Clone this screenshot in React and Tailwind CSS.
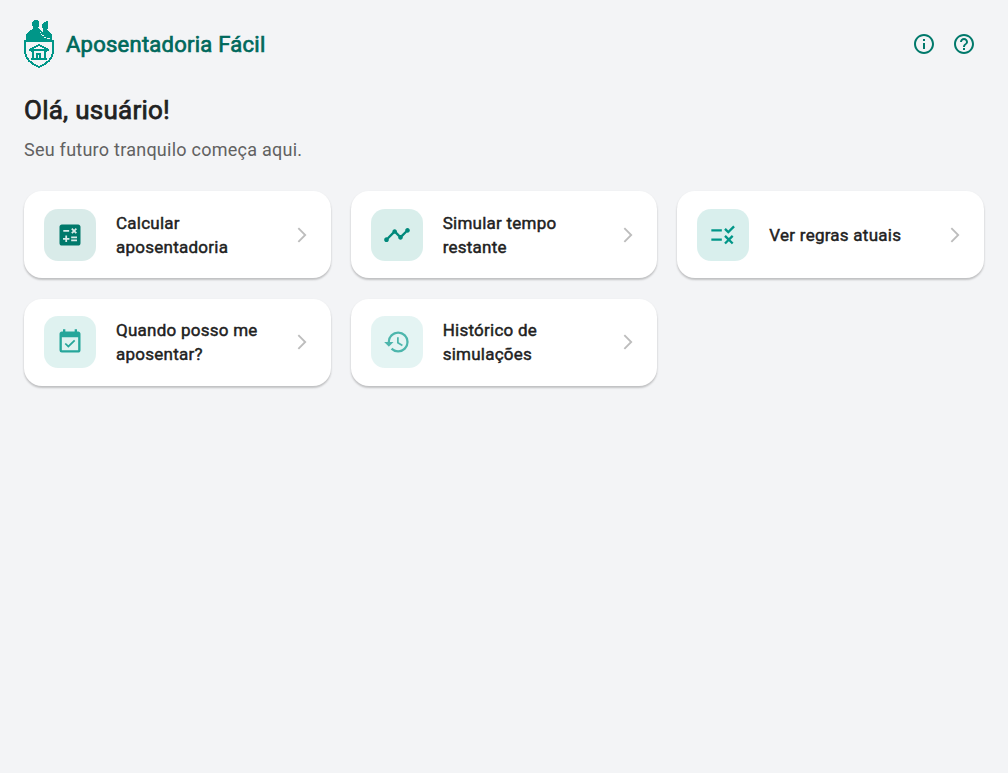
import { MdCalculate, MdTimeline, MdRule, MdEventAvailable, MdHistory, MdArrowForwardIos, MdInfoOutline, MdHelpOutline } from "react-icons/md";

const cards = [
  { label: ["Calcular", "aposentadoria"], Icon: MdCalculate, tone: "bg-[#00796b]/15 text-[#00796b]" },
  { label: ["Simular tempo", "restante"], Icon: MdTimeline, tone: "bg-[#00897b]/15 text-[#00897b]" },
  { label: ["Ver regras atuais"], Icon: MdRule, tone: "bg-[#009688]/15 text-[#009688]" },
  { label: ["Quando posso me", "aposentar?"], Icon: MdEventAvailable, tone: "bg-[#26a69a]/15 text-[#26a69a]" },
  { label: ["Histórico de", "simulações"], Icon: MdHistory, tone: "bg-[#4db6ac]/15 text-[#4db6ac]" },
];

function Logo() {
  return (
    <svg width="30" height="48" viewBox="0 0 30 48" fill="#009688" shapeRendering="crispEdges">
      <path d="M2 21V15L3 13L5 11L9 9V7L8 5V3L9 1L11 0H13L15 1V6L14 8L16 9.500L18 12L19 11V9L18 8V4L20 2L24 1V8L23 10L26 12L28 15V21Z" />
      <path d="M16 12h1v1h-1zM17 14h1v1h-1zM18 15h2v1h-2zM20 17h2v1h-2zM23 18h3v1h-3z" fill="#f3f4f6" />
      <path d="M1 21H29V32Q28 42 15 47Q2 42 1 32Z" fill="#f3f4f6" stroke="#009688" strokeWidth="2" />
      <path d="M14 24h2v1h2v1h2v1h2v1h2v1h1v2h-2v1h-1v6h1v2H7v-2h1v-6H7v-1H5v-2h1v-1h2v-1h2v-1h2v-1h2zM14 26v1h-2v1h-2v1h10v-1h-2v-1h-2v-1zM10 31v7h2v-5h5v5h3v-7zM14 35v3h1v-3z" fillRule="evenodd" />
    </svg>
  );
}

export default function App() {
  return (
    <div className="min-h-screen bg-[#f3f4f6] px-6 pt-5 font-['Roboto',sans-serif]">
      <header className="flex h-12 items-center">
        <Logo />
        <h1 className="ml-3 flex-1 pt-px text-[22px] font-normal leading-7 tracking-[0.25px] text-[#00695c] [-webkit-text-stroke:0.7px_#00695c]">Aposentadoria Fácil</h1>
        <div className="flex gap-4 pr-2 text-[#00796b]">
          <MdInfoOutline size={24} />
          <MdHelpOutline size={24} />
        </div>
      </header>
      <h2 className="mt-6 text-[26px] font-normal leading-9 tracking-[0.25px] text-[#212121] [-webkit-text-stroke:0.75px_#212121]">Olá, usuário!</h2>
      <p className="mt-2 text-lg leading-7 tracking-[0.25px] text-[#616161]">Seu futuro tranquilo começa aqui.</p>
      <main className="mt-[27px] grid grid-cols-3 gap-x-5 gap-y-[20.3px]">
        {cards.map(({ label, Icon, tone }) => (
          <div key={label[0]} className="flex h-[87.4px] items-center rounded-[18px] bg-white px-5 shadow-[0_2px_2px_rgba(0,0,0,0.18),0_1px_3px_rgba(0,0,0,0.06)]">
            <div className={`flex size-[52px] items-center justify-center rounded-[14px] ${tone}`}>
              <Icon size={28} />
            </div>
            <div className="ml-5 flex-1 text-[17px] font-normal leading-6 tracking-[0.25px] text-[#212121] [-webkit-text-stroke:0.45px_#212121]">
              {label.map((line) => <div key={line}>{line}</div>)}
            </div>
            <MdArrowForwardIos size={18} className="text-[#bdbdbd]" />
          </div>
        ))}
      </main>
    </div>
  );
}
